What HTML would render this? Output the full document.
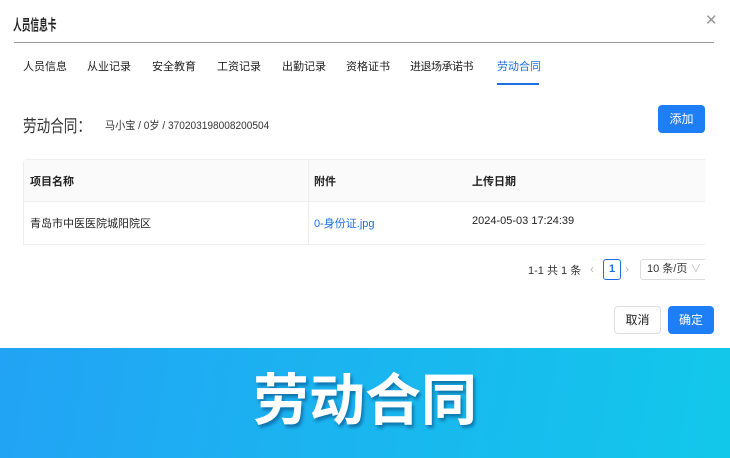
<!DOCTYPE html><html><head><meta charset="utf-8"><style>
*{margin:0;padding:0;box-sizing:border-box}
body{width:730px;height:458px;overflow:hidden;background:#fff;font-family:"Liberation Sans","Noto Sans CJK SC",sans-serif;color:#222;position:relative}
.a{position:absolute;white-space:nowrap}
.t{position:absolute;top:58px;font-size:11px;color:#222;white-space:nowrap}
.s{transform-origin:left top}
</style></head><body>
<div class="a s" style="left:13px;top:14px;font-size:15px;font-weight:bold;transform:scaleX(.58)">人员信息卡</div>
<div class="a" style="left:705px;top:11px;font-size:15px;color:#999">✕</div>
<div class="a" style="left:14px;top:42px;width:700px;height:1px;background:#999"></div>
<div class="t" style="left:23px">人员信息</div>
<div class="t" style="left:87px">从业记录</div>
<div class="t" style="left:152px">安全教育</div>
<div class="t" style="left:217px">工资记录</div>
<div class="t" style="left:282px">出勤记录</div>
<div class="t" style="left:346px">资格证书</div>
<div class="t" style="left:410px;letter-spacing:-0.5px">进退场承诺书</div>
<div class="t" style="left:497px;color:#1d6fe0">劳动合同</div>
<div class="a" style="left:497px;top:83px;width:42px;height:2px;background:#1d6fe0"></div>
<div class="a s" style="left:23px;top:112px;font-size:17px;color:#333;transform:scaleX(.8)">劳动合同：</div>
<div class="a s" style="left:105px;top:117px;font-size:11px;color:#333;transform:scaleX(.92)">马小宝 / 0岁 / 370203198008200504</div>
<div class="a" style="left:658px;top:105px;width:47px;height:28px;background:#1e7ef5;border-radius:4px;color:#fff;font-size:12px;text-align:center;line-height:28px">添加</div>
<div class="a" style="left:23px;top:159px;width:682px;height:86px;border:1px solid #eee;border-right:none;border-radius:4px 0 0 0"></div>
<div class="a" style="left:24px;top:160px;width:681px;height:42px;background:#fafafa;border-bottom:1px solid #eee"></div>
<div class="a" style="left:308px;top:160px;width:1px;height:84px;background:#eee"></div>
<div class="a" style="left:30px;top:173px;font-size:11px;font-weight:bold">项目名称</div>
<div class="a" style="left:314px;top:173px;font-size:11px;font-weight:bold">附件</div>
<div class="a" style="left:472px;top:173px;font-size:11px;font-weight:bold">上传日期</div>
<div class="a" style="left:30px;top:215px;font-size:11px">青岛市中医医院城阳院区</div>
<div class="a" style="left:314px;top:215px;font-size:11px;color:#1d6fe0">0-身份证.jpg</div>
<div class="a" style="left:472px;top:215px;font-size:11px">2024-05-03 17:24:39</div>
<div class="a" style="left:528px;top:262px;font-size:11px;color:#333">1-1 共 1 条</div>
<div class="a" style="left:590px;top:262px;font-size:12px;color:#bbb">‹</div>
<div class="a" style="left:603px;top:259px;width:18px;height:21px;border:1px solid #1d6fe0;border-radius:3px;color:#1d6fe0;font-size:11px;text-align:center;line-height:19px;font-weight:bold">1</div>
<div class="a" style="left:625px;top:262px;font-size:12px;color:#bbb">›</div>
<div class="a" style="left:640px;top:259px;width:65px;height:21px;border:1px solid #ddd;border-right:none;border-radius:3px 0 0 3px;font-size:11px;line-height:19px;padding-left:6px;color:#333">10 条/页 <span style="color:#bbb">∨</span></div>
<div class="a" style="left:614px;top:306px;width:47px;height:28px;border:1px solid #ddd;border-radius:4px;font-size:12px;text-align:center;line-height:26px">取消</div>
<div class="a" style="left:668px;top:306px;width:46px;height:28px;background:#1e7ef5;border-radius:4px;color:#fff;font-size:12px;text-align:center;line-height:28px">确定</div>
<div class="a" style="left:0;top:348px;width:730px;height:110px;background:linear-gradient(100deg,#22a3f5,#12c8ea)"></div>
<div class="a" style="left:0;top:366px;width:730px;text-align:center;font-size:56px;font-weight:bold;color:#fff;text-shadow:2px 3px 3px rgba(0,40,90,.45);line-height:70px">劳动合同</div>
</body></html>
